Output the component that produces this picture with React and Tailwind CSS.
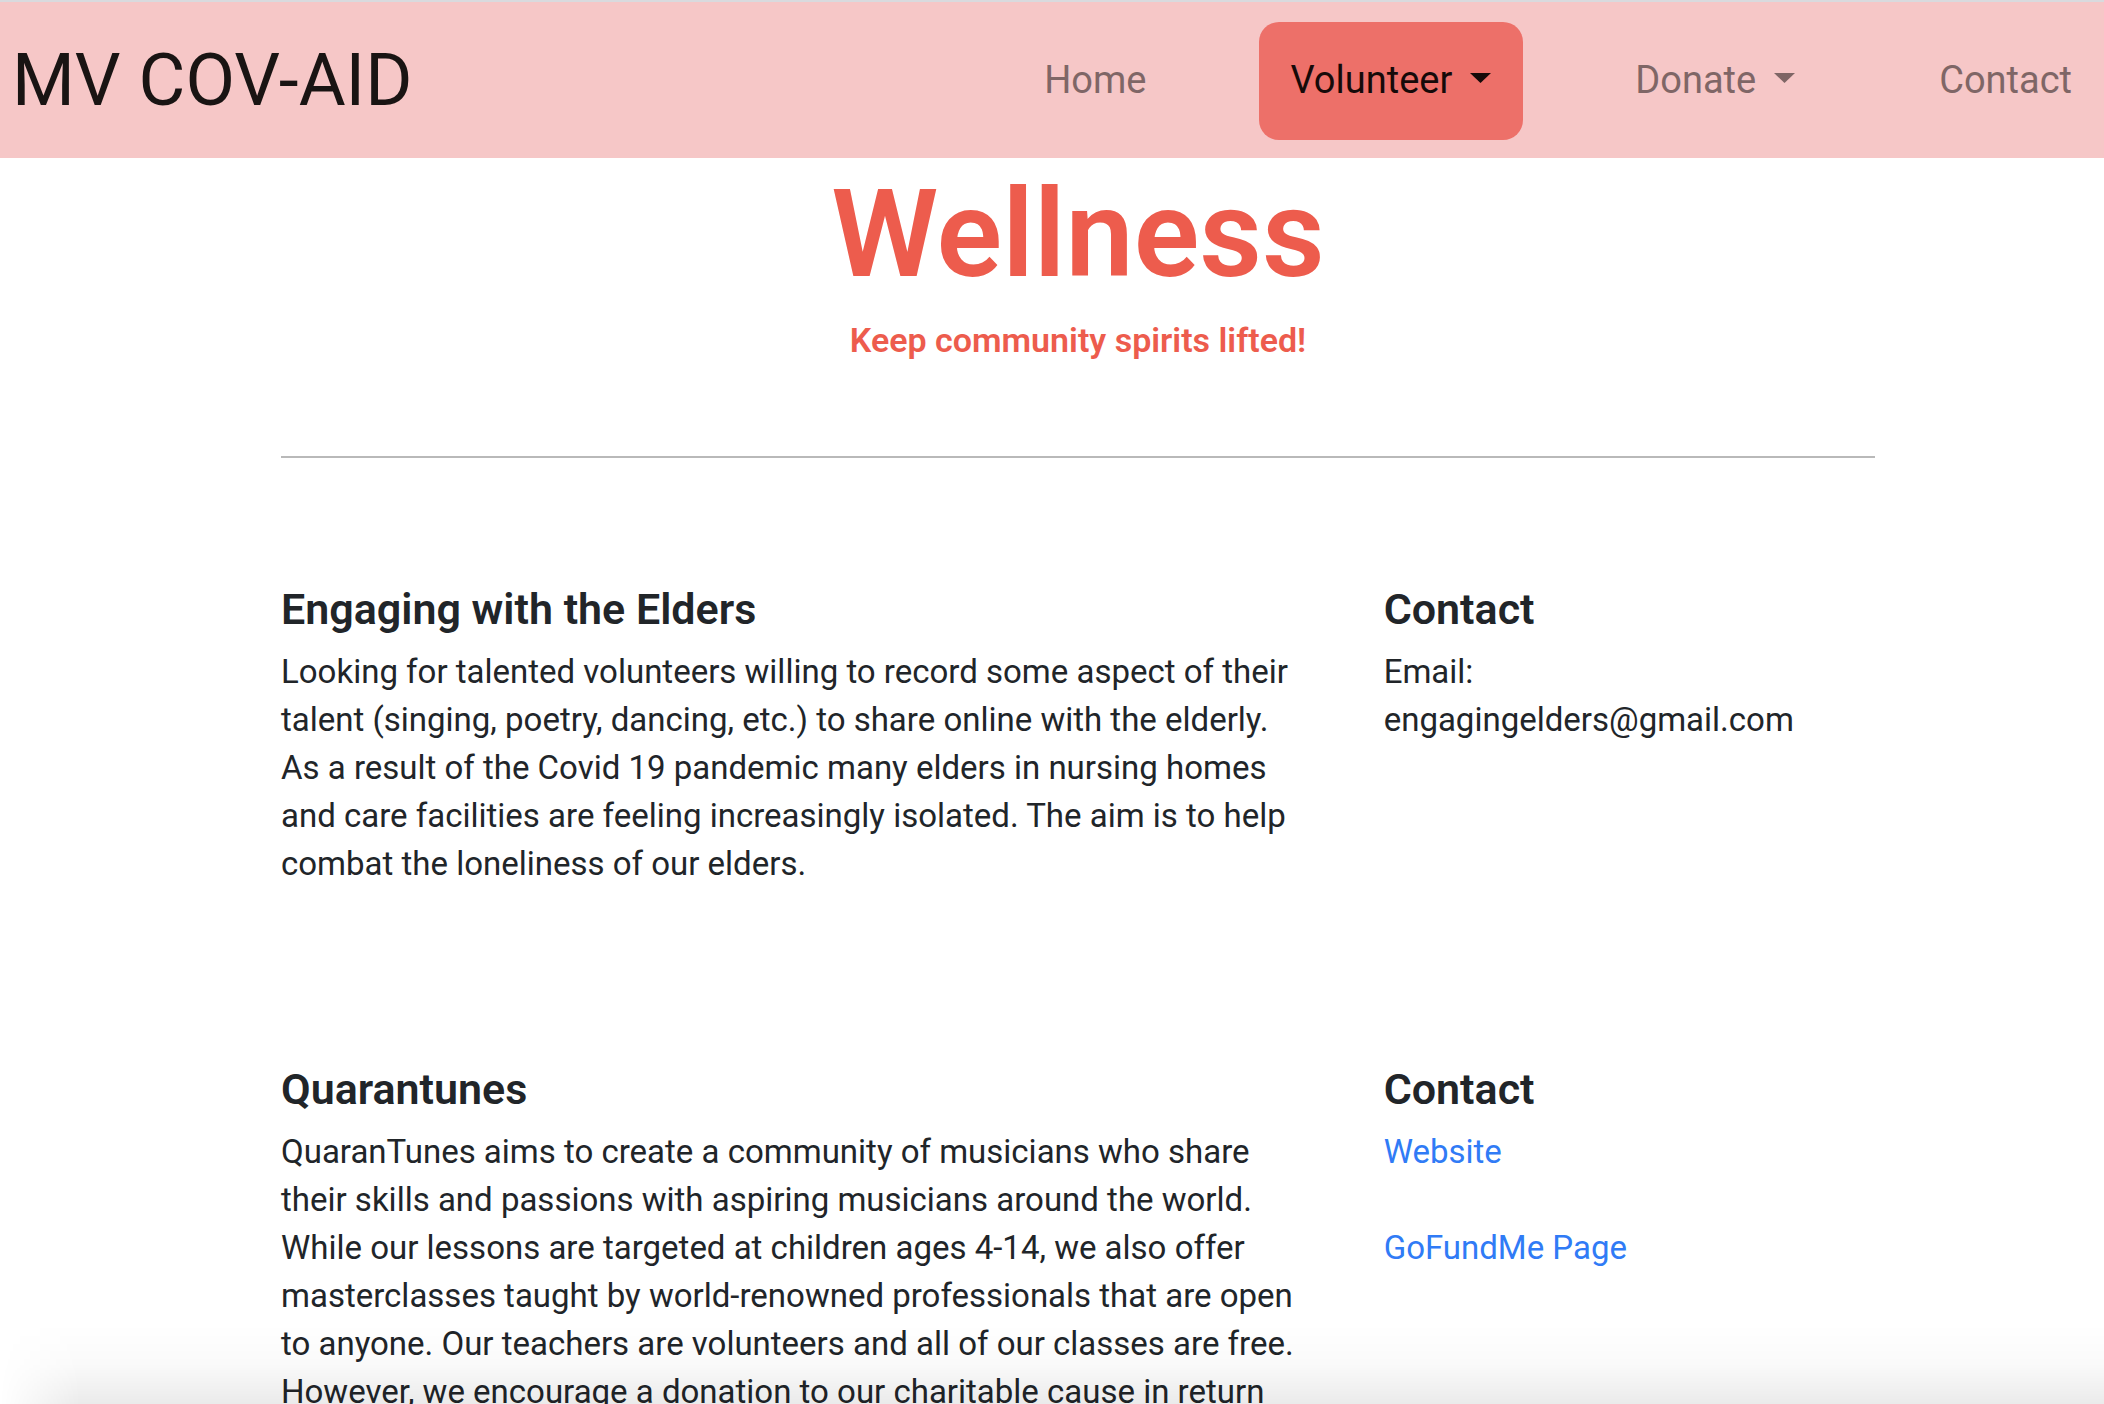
import React from "react";

function Caret() {
  return (
    <svg className="mb-1 h-[10px] w-[21px]" viewBox="0 0 21 10" aria-hidden="true">
      <path d="M0 0h21L10.5 10z" fill="currentColor" />
    </svg>
  );
}

function NavItem({ label, menu, active }) {
  const tone = active ? "bg-[#ed7069] text-[#160a09]" : "text-[#7f6666]";
  const shape = "flex h-[118px] items-center gap-[18px] rounded-[20px] px-8 pb-[2px] text-[38px] leading-[54px]";
  return (
    <li>
      {menu ? (
        <button type="button" aria-haspopup="menu" className={shape + " " + tone}>
          {label}
          <Caret />
        </button>
      ) : (
        <a href="#" className={shape + " " + tone}>
          {label}
        </a>
      )}
    </li>
  );
}

function Listing({ title, lines, children }) {
  return (
    <section className="-mx-[30px] grid grid-cols-3">
      <div className="col-span-2 px-[30px]">
        <h3 className="mb-[14px] text-[43px] font-semibold leading-[50px]">{title}</h3>
        <p className="whitespace-pre-line">{lines.join("\n")}</p>
      </div>
      <div className="px-[30px]">
        <h3 className="mb-[14px] text-[43px] font-semibold leading-[50px]">Contact</h3>
        {children}
      </div>
    </section>
  );
}

const elders = [
  "Looking for talented volunteers willing to record some aspect of their",
  "talent (singing, poetry, dancing, etc.) to share online with the elderly.",
  "As a result of the Covid 19 pandemic many elders in nursing homes",
  "and care facilities are feeling increasingly isolated. The aim is to help",
  "combat the loneliness of our elders.",
];

const quarantunes = [
  "QuaranTunes aims to create a community of musicians who share",
  "their skills and passions with aspiring musicians around the world.",
  "While our lessons are targeted at children ages 4-14, we also offer",
  "masterclasses taught by world-renowned professionals that are open",
  "to anyone. Our teachers are volunteers and all of our classes are free.",
  "However, we encourage a donation to our charitable cause in return",
];

export default function App() {
  return (
    <div className="relative h-screen overflow-hidden bg-white font-['Roboto',sans-serif] text-[33px] leading-[48px] text-[#212529]">
      <nav className="flex items-center justify-between border-t-2 border-[#d9dade] bg-[#f6c7c7] pb-[18px] pt-5">
        <a href="#" className="pl-3 text-[72px] leading-[108px] text-[#191413]">
          MV COV-AID
        </a>
        <ul className="flex gap-20">
          <NavItem label="Home" />
          <NavItem label="Volunteer" menu active />
          <NavItem label="Donate" menu />
          <NavItem label="Contact" />
        </ul>
      </nav>
      <main className="pl-[281px] pr-[229px]">
        <header className="text-center font-semibold text-[#ed5c4d]">
          <h1 className="pt-1 text-[122px] leading-[146px]">Wellness</h1>
          <p className="mt-2 text-[34px]">Keep community spirits lifted!</p>
        </header>
        <hr className="mb-[126px] mt-[92px] border-t-2 border-[#b9b9b9]" />
        <div className="flex flex-col gap-44">
          <Listing title="Engaging with the Elders" lines={elders}>
            <p>
              Email:
              <br />
              engagingelders@gmail.com
            </p>
          </Listing>
          <Listing title="Quarantunes" lines={quarantunes}>
            <div className="flex flex-col items-start gap-12 text-[#307bf6]">
              <a href="#">Website</a>
              <a href="#">GoFundMe Page</a>
            </div>
          </Listing>
        </div>
      </main>
      <div className="pointer-events-none absolute inset-x-0 bottom-0 h-20 bg-linear-to-t from-black/8 via-black/2 to-transparent [mask-image:linear-gradient(to_right,transparent,black_80px)]" />
    </div>
  );
}
